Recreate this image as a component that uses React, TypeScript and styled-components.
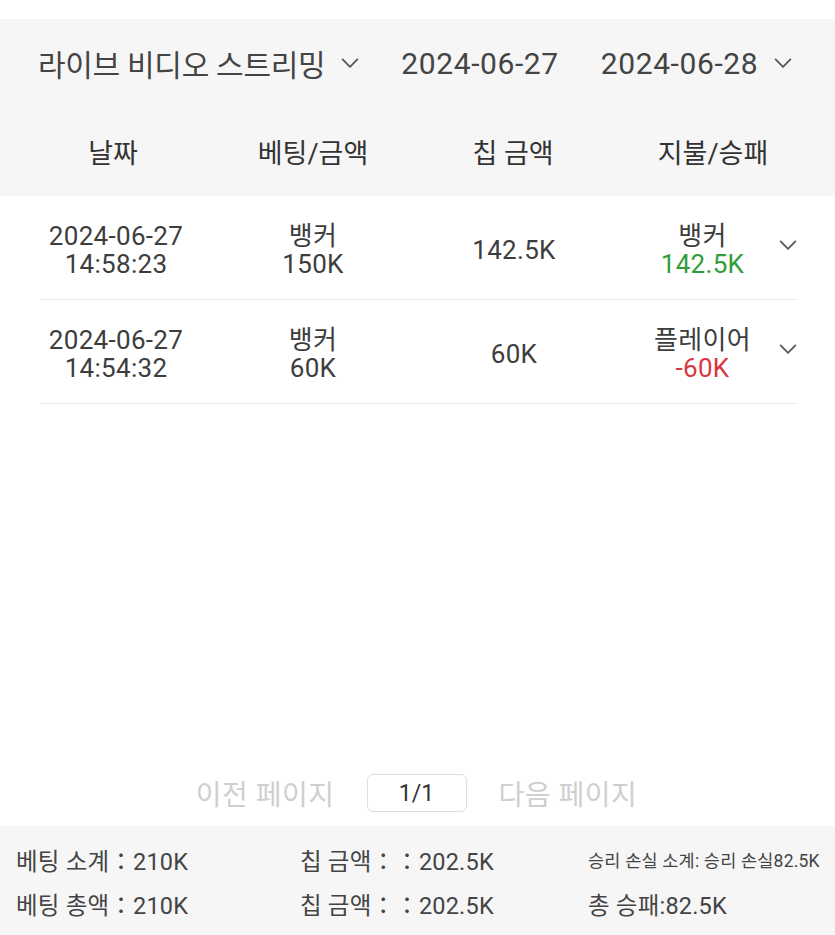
import React from 'react';
import styled, { createGlobalStyle } from 'styled-components';

const GlobalStyle = createGlobalStyle`
  html, body {
    margin: 0;
    padding: 0;
    background: #ffffff;
  }
  body {
    font-family: Roboto, "Noto Sans CJK KR", "Noto Sans", sans-serif;
    color: #3d3d3d;
  }
`;

const Page = styled.div`
  display: flex;
  flex-direction: column;
  min-height: 100vh;
  padding-top: 19px;
  box-sizing: border-box;
`;

const TopPanel = styled.div`
  background: #f6f6f6;
  height: 177px;
  display: flex;
  flex-direction: column;
`;

const FilterBar = styled.div`
  display: flex;
  align-items: center;
  height: 88px;
  padding-left: 38px;
  gap: 42px;
  font-size: 30px;
  color: #444;
`;

const FilterItem = styled.div<{ $tight?: boolean }>`
  display: flex;
  align-items: center;
  gap: 16px;
  white-space: nowrap;
  letter-spacing: ${(p) => (p.$tight ? '-0.3px' : '0.6px')};
`;

const HeaderRow = styled.div`
  display: grid;
  grid-template-columns: repeat(4, 200px);
  padding: 0 13px;
  align-items: center;
  height: 89px;
  font-size: 27px;
  color: #333;
`;

const HeaderCell = styled.div`
  text-align: center;
`;

const List = styled.div`
  flex: 1;
  display: flex;
  flex-direction: column;
  padding: 0 38px 0 40px;
`;

const Row = styled.div`
  display: grid;
  grid-template-columns: 152px 242px 160px 1fr 26px;
  align-items: center;
  height: 99px;
  border-bottom: 1px solid #ececec;
  font-size: 26px;
  line-height: 28px;
  letter-spacing: 0.3px;
  color: #3d3d3d;
  padding-top: 4px;
  box-sizing: content-box;
`;

const Cell = styled.div<{ $shift?: number }>`
  display: flex;
  flex-direction: column;
  align-items: center;
  padding-left: ${(p) => p.$shift || 0}px;
  white-space: nowrap;
`;

const Amount = styled.span<{ $tone?: 'win' | 'lose' }>`
  color: ${(p) => (p.$tone === 'win' ? '#2f9e3a' : p.$tone === 'lose' ? '#d8373f' : 'inherit')};
`;

const Toggle = styled.div`
  display: flex;
  justify-content: flex-end;
  margin-top: -8px;
`;

const Pager = styled.div`
  display: flex;
  justify-content: center;
  align-items: center;
  gap: 32px;
  height: 66px;
  font-size: 28px;
  padding-right: 2px;
`;

const PagerLink = styled.span`
  color: #cfcfcf;
  letter-spacing: 0.5px;
`;

const PageBox = styled.div`
  width: 98px;
  height: 36px;
  border: 1px solid #dedede;
  border-radius: 6px;
  display: flex;
  align-items: center;
  justify-content: center;
  font-size: 23px;
  color: #333;
`;

const Summary = styled.div`
  background: #f6f6f6;
  height: 109px;
  display: grid;
  grid-template-columns: 284px 288px 1fr;
  grid-template-rows: 44px 44px;
  align-content: center;
  padding-left: 16px;
  padding-top: 2px;
  box-sizing: border-box;
  color: #444;
`;

const SummaryCell = styled.div<{ $small?: boolean }>`
  display: flex;
  align-items: center;
  white-space: nowrap;
  font-size: ${(p) => (p.$small ? '17.5px' : '23.5px')};
  letter-spacing: 0.2px;
`;

const Chevron = ({ size = 18 }: { size?: number }) => (
  <svg width={size} height={size * 0.6} viewBox="0 0 18 11" fill="none">
    <path d="M1.5 1.5 L9 9 L16.5 1.5" stroke="#555" strokeWidth="1.8" strokeLinecap="round" strokeLinejoin="round" />
  </svg>
);

type Bet = {
  date: string;
  time: string;
  side: string;
  bet: string;
  chip: string;
  result: string;
  payout: string;
  tone: 'win' | 'lose';
};

const bets: Bet[] = [
  { date: '2024-06-27', time: '14:58:23', side: '뱅커', bet: '150K', chip: '142.5K', result: '뱅커', payout: '142.5K', tone: 'win' },
  { date: '2024-06-27', time: '14:54:32', side: '뱅커', bet: '60K', chip: '60K', result: '플레이어', payout: '-60K', tone: 'lose' },
];

const App: React.FC = () => {
  return (
    <Page>
      <GlobalStyle />
      <TopPanel>
        <FilterBar>
          <FilterItem $tight>
            라이브 비디오 스트리밍 <Chevron />
          </FilterItem>
          <FilterItem>2024-06-27</FilterItem>
          <FilterItem>
            2024-06-28 <Chevron />
          </FilterItem>
        </FilterBar>
        <HeaderRow>
          <HeaderCell>날짜</HeaderCell>
          <HeaderCell>베팅/금액</HeaderCell>
          <HeaderCell>칩 금액</HeaderCell>
          <HeaderCell>지불/승패</HeaderCell>
        </HeaderRow>
      </TopPanel>

      <List>
        {bets.map((b) => (
          <Row key={b.time}>
            <Cell>
              <span>{b.date}</span>
              <span>{b.time}</span>
            </Cell>
            <Cell>
              <span>{b.side}</span>
              <span>{b.bet}</span>
            </Cell>
            <Cell>{b.chip}</Cell>
            <Cell $shift={40}>
              <span>{b.result}</span>
              <Amount $tone={b.tone}>{b.payout}</Amount>
            </Cell>
            <Toggle>
              <Chevron />
            </Toggle>
          </Row>
        ))}
      </List>

      <Pager>
        <PagerLink>이전 페이지</PagerLink>
        <PageBox>1/1</PageBox>
        <PagerLink>다음 페이지</PagerLink>
      </Pager>

      <Summary>
        <SummaryCell>베팅 소계：210K</SummaryCell>
        <SummaryCell>칩 금액：：202.5K</SummaryCell>
        <SummaryCell $small>승리 손실 소계: 승리 손실82.5K</SummaryCell>
        <SummaryCell>베팅 총액：210K</SummaryCell>
        <SummaryCell>칩 금액：：202.5K</SummaryCell>
        <SummaryCell>총 승패:82.5K</SummaryCell>
      </Summary>
    </Page>
  );
};

export default App;
